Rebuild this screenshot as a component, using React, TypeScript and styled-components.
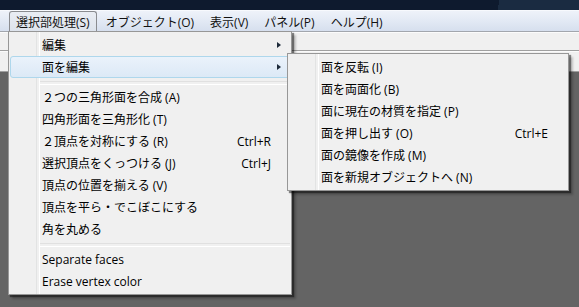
import styled, { createGlobalStyle, css } from 'styled-components';

const GlobalStyle = createGlobalStyle`
  html, body {
    margin: 0;
    padding: 0;
    background: #646464;
  }
  * {
    box-sizing: border-box;
  }
`;

const FONT = `"Open Sans", "Noto Sans CJK JP", sans-serif`;

type Entry =
  | { kind: 'item'; label: string; shortcut?: string; sub?: boolean; active?: boolean }
  | { kind: 'sep' };

const mainEntries: Entry[] = [
  { kind: 'item', label: '編集', sub: true },
  { kind: 'item', label: '面を編集', sub: true, active: true },
  { kind: 'sep' },
  { kind: 'item', label: '２つの三角形面を合成 (A)' },
  { kind: 'item', label: '四角形面を三角形化 (T)' },
  { kind: 'item', label: '２頂点を対称にする (R)', shortcut: 'Ctrl+R' },
  { kind: 'item', label: '選択頂点をくっつける (J)', shortcut: 'Ctrl+J' },
  { kind: 'item', label: '頂点の位置を揃える (V)' },
  { kind: 'item', label: '頂点を平ら・でこぼこにする' },
  { kind: 'item', label: '角を丸める' },
  { kind: 'sep' },
  { kind: 'item', label: 'Separate faces' },
  { kind: 'item', label: 'Erase vertex color' },
];

const subEntries: Entry[] = [
  { kind: 'item', label: '面を反転 (I)' },
  { kind: 'item', label: '面を両面化 (B)' },
  { kind: 'item', label: '面に現在の材質を指定 (P)' },
  { kind: 'item', label: '面を押し出す (O)', shortcut: 'Ctrl+E' },
  { kind: 'item', label: '面の鏡像を作成 (M)' },
  { kind: 'item', label: '面を新規オブジェクトへ (N)' },
];

const menuBarItems = ['選択部処理(S)', 'オブジェクト(O)', '表示(V)', 'パネル(P)', 'ヘルプ(H)'];

const Screen = styled.div`
  position: relative;
  width: 579px;
  height: 307px;
  overflow: hidden;
  display: flex;
  flex-direction: column;
  font-family: ${FONT};
  font-size: 12px;
  color: #000;
`;

const TitleStrip = styled.div`
  height: 10px;
  background: linear-gradient(100deg, #0e1a2e 0 86%, #1a2b41 86%);
`;

const MenuBar = styled.div`
  height: 22px;
  display: flex;
  align-items: stretch;
  padding-left: 9px;
  border-top: 1px solid #f7f9fd;
  border-bottom: 1px solid #a2a6ad;
  background: linear-gradient(to bottom, #eef2f9 0%, #e6ecf6 35%, #d6dfee 100%);
`;

const BarItem = styled.div<{ $open?: boolean }>`
  display: flex;
  align-items: center;
  padding: 0 6px;
  margin-right: 2px;
  color: #111;
  white-space: nowrap;
  border: 1px solid transparent;
  border-bottom: none;
  border-radius: 3px 3px 0 0;
  ${(p) =>
    p.$open &&
    css`
      border-color: #8a8c90;
      background: linear-gradient(to bottom, #e9edf3, #dde3ec);
    `}
`;

const ToolRow = styled.div<{ $h: number }>`
  height: ${(p) => p.$h}px;
  background: #f0f0f0;
  border-top: 1px solid #fbfbfb;
  border-bottom: 1px solid #a0a0a0;
`;

const Viewport = styled.div`
  flex: 1;
  background: #646464;
`;

const MenuPanel = styled.div<{ $x: number; $y: number; $w: number }>`
  position: absolute;
  left: ${(p) => p.$x}px;
  top: ${(p) => p.$y}px;
  width: ${(p) => p.$w}px;
  padding: 2px 1px;
  background: #f0f0f0;
  border: 1px solid #979797;
  box-shadow: 2px 2px 1px rgba(0, 0, 0, 0.45), 4px 4px 2px rgba(0, 0, 0, 0.2);
  z-index: 2;

  &::before {
    content: '';
    position: absolute;
    top: 0;
    bottom: 0;
    left: 27px;
    width: 2px;
    border-left: 1px solid #e2e3e3;
    border-right: 1px solid #ffffff;
  }
`;

const Item = styled.div<{ $active?: boolean }>`
  position: relative;
  height: 22px;
  display: flex;
  align-items: center;
  padding-left: 31px;
  border: 1px solid transparent;
  border-radius: 3px;
  white-space: nowrap;
  ${(p) =>
    p.$active &&
    css`
      border-color: #aed7ec;
      background: linear-gradient(to bottom, #eaf2fb, #dce9f6);
    `}
`;

const Label = styled.span`
  flex: 1;
`;

const Shortcut = styled.span`
  text-align: right;
`;

const ArrowCell = styled.span`
  width: 18px;
  height: 100%;
  display: flex;
  align-items: center;
  padding-left: 6px;
`;

const Arrow = styled.span`
  width: 0;
  height: 0;
  border-top: 3.5px solid transparent;
  border-bottom: 3.5px solid transparent;
  border-left: 4px solid #1d2a3a;
`;

const Separator = styled.div`
  height: 8px;
  margin-left: 29px;
  padding-top: 3px;

  &::after {
    content: '';
    display: block;
    height: 2px;
    border-top: 1px solid #e0e0e0;
    border-bottom: 1px solid #ffffff;
  }
`;

function Menu({ entries, x, y, w }: { entries: Entry[]; x: number; y: number; w: number }) {
  return (
    <MenuPanel $x={x} $y={y} $w={w}>
      {entries.map((e, i) =>
        e.kind === 'sep' ? (
          <Separator key={i} />
        ) : (
          <Item key={i} $active={e.active}>
            <Label>{e.label}</Label>
            {e.shortcut && <Shortcut>{e.shortcut}</Shortcut>}
            <ArrowCell>{e.sub && <Arrow />}</ArrowCell>
          </Item>
        ),
      )}
    </MenuPanel>
  );
}

export default function App() {
  return (
    <>
      <GlobalStyle />
      <Screen>
        <TitleStrip />
        <MenuBar>
          {menuBarItems.map((m, i) => (
            <BarItem key={m} $open={i === 0}>
              {m}
            </BarItem>
          ))}
        </MenuBar>
        <ToolRow $h={19} />
        <ToolRow $h={21} />
        <Viewport />
        <Menu entries={mainEntries} x={8} y={31} w={284} />
        <Menu entries={subEntries} x={287} y={53} w={282} />
      </Screen>
    </>
  );
}
